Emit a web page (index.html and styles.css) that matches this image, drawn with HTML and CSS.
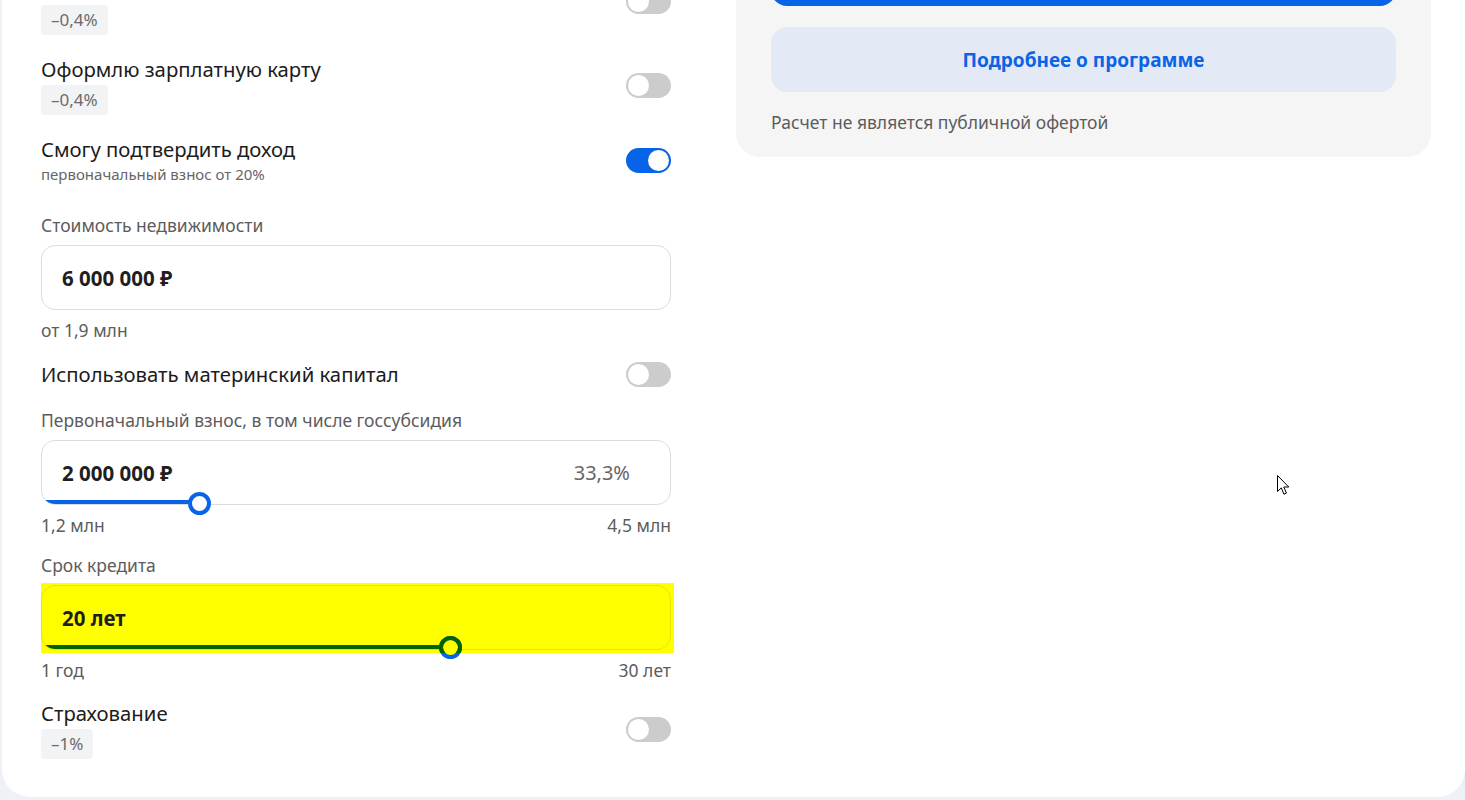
FILE: index.html
```html
<!DOCTYPE html>
<html lang="ru">
<head>
<meta charset="utf-8">
<title>Ипотечный калькулятор</title>
<link rel="stylesheet" href="styles.css">
</head>
<body>
<div class="page">
  <div class="card">
    <div class="form">
      <div class="row row-first">
        <div class="row-text"><span class="badge">–0,4%</span></div>
        <span class="toggle toggle-cut"></span>
      </div>

      <div class="row row-salary">
        <div class="row-text">
          <div class="row-title">Оформлю зарплатную карту</div>
          <span class="badge">–0,4%</span>
        </div>
        <span class="toggle"></span>
      </div>

      <div class="row row-income">
        <div class="row-text">
          <div class="row-title">Смогу подтвердить доход</div>
          <div class="row-sub">первоначальный взнос от 20%</div>
        </div>
        <span class="toggle on"></span>
      </div>

      <div class="field field-price">
        <div class="field-label">Стоимость недвижимости</div>
        <div class="input"><span class="value">6 000 000 ₽</span></div>
        <div class="hint">от 1,9 млн</div>
      </div>

      <div class="row row-mat">
        <div class="row-title">Использовать материнский капитал</div>
        <span class="toggle"></span>
      </div>

      <div class="field field-down">
        <div class="field-label">Первоначальный взнос, в том числе госсубсидия</div>
        <div class="input slider-input">
          <span class="value">2 000 000 ₽</span>
          <span class="percent">33,3%</span>
          <div class="track"><div class="fill" style="width:158px"></div></div>
          <span class="thumb" style="left:146px"></span>
        </div>
        <div class="range"><span>1,2 млн</span><span>4,5 млн</span></div>
      </div>

      <div class="field field-term">
        <div class="field-label">Срок кредита</div>
        <div class="highlight">
          <div class="input slider-input">
            <span class="value">20 лет</span>
            <div class="track"><div class="fill" style="width:409px"></div></div>
            <span class="thumb thumb-hl" style="left:397px"></span>
          </div>
        </div>
        <div class="range range-term"><span>1 год</span><span>30 лет</span></div>
      </div>

      <div class="row row-ins">
        <div class="row-text">
          <div class="row-title">Страхование</div>
          <span class="badge">–1%</span>
        </div>
        <span class="toggle"></span>
      </div>
    </div>

    <aside class="summary">
      <div class="summary-box">
        <span class="btn btn-primary"></span>
        <span class="btn btn-secondary">Подробнее о программе</span>
        <div class="disclaimer">Расчет не является публичной офертой</div>
      </div>
    </aside>
  </div>

  <svg class="cursor" width="13" height="21" viewBox="0 0 13 21" aria-hidden="true">
    <path d="M0.5 0.5 L0.5 16.5 L4.3 12.9 L6.9 19.2 L9.4 18.1 L6.8 12 L11.8 12 Z" fill="#fff" stroke="#000" stroke-width="1" stroke-linejoin="miter"/>
  </svg>
</div>
</body>
</html>
```

FILE: styles.css
```css
* { box-sizing: border-box; }

html, body {
  margin: 0;
  padding: 0;
}

body {
  background: #eef2f7;
  font-family: "Noto Sans", "Open Sans", "Liberation Sans", sans-serif;
  color: #1f1f1f;
  height: 800px;
  overflow: hidden;
}

.page {
  position: relative;
  height: 800px;
}

.card {
  margin-left: 2px;
  background: #fff;
  border-radius: 0 0 28px 28px;
  display: flex;
  gap: 65px;
  padding: 0 34px 38px 39px;
}

.form {
  width: 630px;
  flex: none;
  display: flex;
  flex-direction: column;
}

.row {
  display: flex;
  justify-content: space-between;
  align-items: center;
}

.row-text {
  display: flex;
  flex-direction: column;
  align-items: flex-start;
}

.row-title {
  font-size: 20.3px;
  line-height: 26px;
  color: #1c1c1c;
}

.row-sub {
  font-size: 15px;
  line-height: 20px;
  color: #666;
  margin-top: 2px;
}

.badge {
  display: inline-block;
  height: 30px;
  line-height: 30px;
  padding: 0 10px;
  font-size: 17px;
  color: #6a6a6a;
  background: #f2f3f5;
  border-radius: 4px;
  margin-top: 3px;
}

.row-first {
  margin-top: 2px;
  align-items: flex-start;
}

.toggle-cut {
  margin-top: -13px;
}

.row-salary { margin-top: 21px; }
.row-income { margin-top: 21px; }
.row-mat { margin-top: 20px; }
.row-ins { margin-top: 19px; }

.toggle {
  position: relative;
  flex: none;
  width: 45px;
  height: 25px;
  border-radius: 13px;
  background: #cccccc;
}

.toggle::after {
  content: "";
  position: absolute;
  top: 2px;
  left: 2px;
  width: 21px;
  height: 21px;
  border-radius: 50%;
  background: #fff;
}

.toggle.on {
  background: #0764e8;
}

.toggle.on::after {
  left: 22px;
}

.field { display: flex; flex-direction: column; }
.field-price { margin-top: 30px; }
.field-down { margin-top: 22px; }
.field-term { margin-top: 18px; }

.field-label {
  font-size: 17.5px;
  line-height: 22px;
  color: #5c5c5c;
  margin-bottom: 9px;
}

.input {
  position: relative;
  height: 65px;
  border: 1px solid #dcdcdc;
  border-radius: 14px;
  display: flex;
  align-items: center;
  justify-content: space-between;
  padding: 0 40px 0 20px;
}

.value {
  font-size: 20.5px;
  font-weight: 700;
  color: #1f1f1f;
}

.percent {
  font-size: 20px;
  color: #666;
}

.hint {
  margin-top: 9px;
  font-size: 17.5px;
  line-height: 22px;
  color: #5c5c5c;
}

.track {
  position: absolute;
  inset: 0;
  border-radius: 13px;
  overflow: hidden;
  pointer-events: none;
}

.fill {
  position: absolute;
  left: 0;
  bottom: 0;
  height: 4px;
  background: #0764e8;
}

.thumb {
  position: absolute;
  bottom: -11px;
  width: 23px;
  height: 23px;
  border-radius: 50%;
  border: 4px solid #0764e8;
  background: #fff;
}

.thumb-hl {
  bottom: -10px;
  background: #ffff00;
}

.thumb-hl::after {
  content: "";
  position: absolute;
  inset: -4px;
  border-radius: 50%;
  border: 4px solid #006400;
  clip-path: inset(0 0 6px 0);
}

.range {
  display: flex;
  justify-content: space-between;
  margin-top: 9px;
  font-size: 17.5px;
  line-height: 22px;
  color: #5c5c5c;
}

.range-term { margin-top: 6px; }

.highlight {
  background: #ffff00;
  padding: 2px 3px 3px 0;
  margin: -2px -3px 0 0;
}

.highlight .input {
  border-color: rgba(0, 0, 0, 0.1);
}

.highlight .fill {
  background: #006400;
}

.summary {
  width: 695px;
  flex: none;
}

.summary-box {
  margin-top: -85px;
  background: #f5f5f5;
  border-radius: 0 0 24px 24px;
  padding: 35px 35px 24px;
  display: flex;
  flex-direction: column;
}

.btn {
  display: flex;
  align-items: center;
  justify-content: center;
  border-radius: 16px;
  font-size: 19px;
  font-weight: 700;
}

.btn-primary {
  height: 56px;
  background: #0764e8;
}

.btn-secondary {
  margin-top: 21px;
  height: 65px;
  background: #e3eaf5;
  color: #0b63e5;
}

.disclaimer {
  margin-top: 19px;
  font-size: 17.5px;
  line-height: 22px;
  color: #5c5c5c;
}

.cursor {
  position: absolute;
  left: 1277px;
  top: 475px;
}
```
